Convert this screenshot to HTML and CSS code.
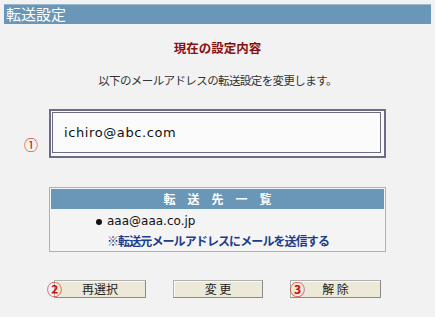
FILE: index.html
```html
<!DOCTYPE html>
<html lang="ja">
<head>
<meta charset="utf-8">
<title>転送設定</title>
<link rel="stylesheet" href="styles.css">
</head>
<body>
<div class="page">
  <div class="titlebar">転送設定</div>
  <div class="content">
    <div class="heading">現在の設定内容</div>
    <div class="lead">以下のメールアドレスの転送設定を変更します。</div>
    <div class="addr-wrap">
      <span class="mark mark1">①</span>
      <div class="addr-box"><div class="addr-inner">ichiro@abc.com</div></div>
    </div>
    <div class="list-box">
      <div class="list-head">転　送　先　一　覧</div>
      <ul class="list-body">
        <li class="item">aaa@aaa.co.jp</li>
        <li class="note">※転送元メールアドレスにメールを送信する</li>
      </ul>
    </div>
    <div class="buttons">
      <div class="btn-wrap"><span class="mark mark2">②</span><button class="btn btn1">再選択</button></div>
      <div class="btn-wrap"><button class="btn btn2">変 更</button></div>
      <div class="btn-wrap"><span class="mark mark3">③</span><button class="btn btn3">解 除</button></div>
    </div>
  </div>
</div>
</body>
</html>
```
FILE: styles.css
```css
html, body {
  margin: 0;
  padding: 0;
  background: #f2f2f2;
}
body {
  font-family: "Noto Sans CJK JP", "DejaVu Sans", sans-serif;
  color: #333;
  font-size: 12px;
}
.page {
  padding: 4px 4px 0 4px;
}
.titlebar {
  height: 20px;
  line-height: 20px;
  background: #6a97b7;
  color: #fff;
  font-size: 15px;
  padding-left: 2px;
  box-shadow: inset 0 1px 0 #9ab9cf;
}
.content {
  display: flex;
  flex-direction: column;
  align-items: center;
}
.heading {
  margin-top: 16px;
  height: 16px;
  line-height: 16px;
  font-size: 12.5px;
  font-weight: bold;
  color: #8a1010;
}
.lead {
  margin-top: 16px;
  height: 16px;
  line-height: 16px;
  font-size: 11.5px;
  color: #333;
  letter-spacing: -0.6px;
}
.addr-wrap {
  position: relative;
  margin-top: 21px;
}
.mark {
  position: absolute;
  color: #cc1111;
  font-size: 14px;
  line-height: 14px;
}
.mark1 {
  left: -25px;
  top: 28px;
  font-weight: normal;
}
.addr-box {
  width: 331px;
  height: 43px;
  border: 2px solid #6c6c84;
  padding: 1px;
  background: #fafafa;
  box-sizing: content-box;
}
.addr-inner {
  box-sizing: border-box;
  height: 41px;
  width: 329px;
  border: 1px solid #6c6c84;
  background: #fbfbfb;
  display: flex;
  align-items: center;
  padding-left: 11px;
  font-family: "DejaVu Sans", sans-serif;
  font-size: 13px;
  letter-spacing: 0.6px;
  color: #111;
}
.list-box {
  margin-top: 29px;
  width: 333px;
  border: 1px solid #98b6cc;
  padding: 1px;
  background: #f4f4f4;
}
.list-head {
  height: 20px;
  line-height: 20px;
  background: #6a97b7;
  color: #fff;
  font-weight: bold;
  text-align: center;
  font-size: 12px;
}
.list-body {
  list-style: none;
  margin: 0;
  padding: 3px 0 0 56px;
}
.list-body li {
  height: 19px;
  line-height: 19px;
}
.item {
  position: relative;
  font-family: "DejaVu Sans", sans-serif;
  font-size: 12px;
  color: #111;
}
.item::before {
  content: "";
  position: absolute;
  left: -11px;
  top: 7px;
  width: 6px;
  height: 6px;
  border-radius: 50%;
  background: #111;
}
.note {
  font-weight: bold;
  color: #1c3c8c;
  font-size: 12px;
  letter-spacing: -0.9px;
}
.buttons {
  margin-top: 28px;
  display: flex;
  gap: 27px;
  justify-content: center;
}
.btn-wrap {
  position: relative;
}
.btn {
  display: block;
  height: 18px;
  padding: 0;
  margin: 0;
  background: #ede9d9;
  border: 1px solid #8a8a8a;
  border-top-color: #b0b0b0;
  border-left-color: #b0b0b0;
  box-shadow: inset 1px 1px 0 #fbfaf4;
  font-family: "Noto Sans CJK JP", sans-serif;
  font-size: 12px;
  line-height: 16px;
  color: #222;
}
.btn1 { width: 92px; }
.btn2 { width: 90px; }
.btn3 { width: 91px; }
.mark2, .mark3 {
  font-weight: bold;
  top: 2px;
  font-size: 15px;
  color: #d01010;
}
.mark2 { left: -7px; }
.mark3 { left: 0px; }
```
